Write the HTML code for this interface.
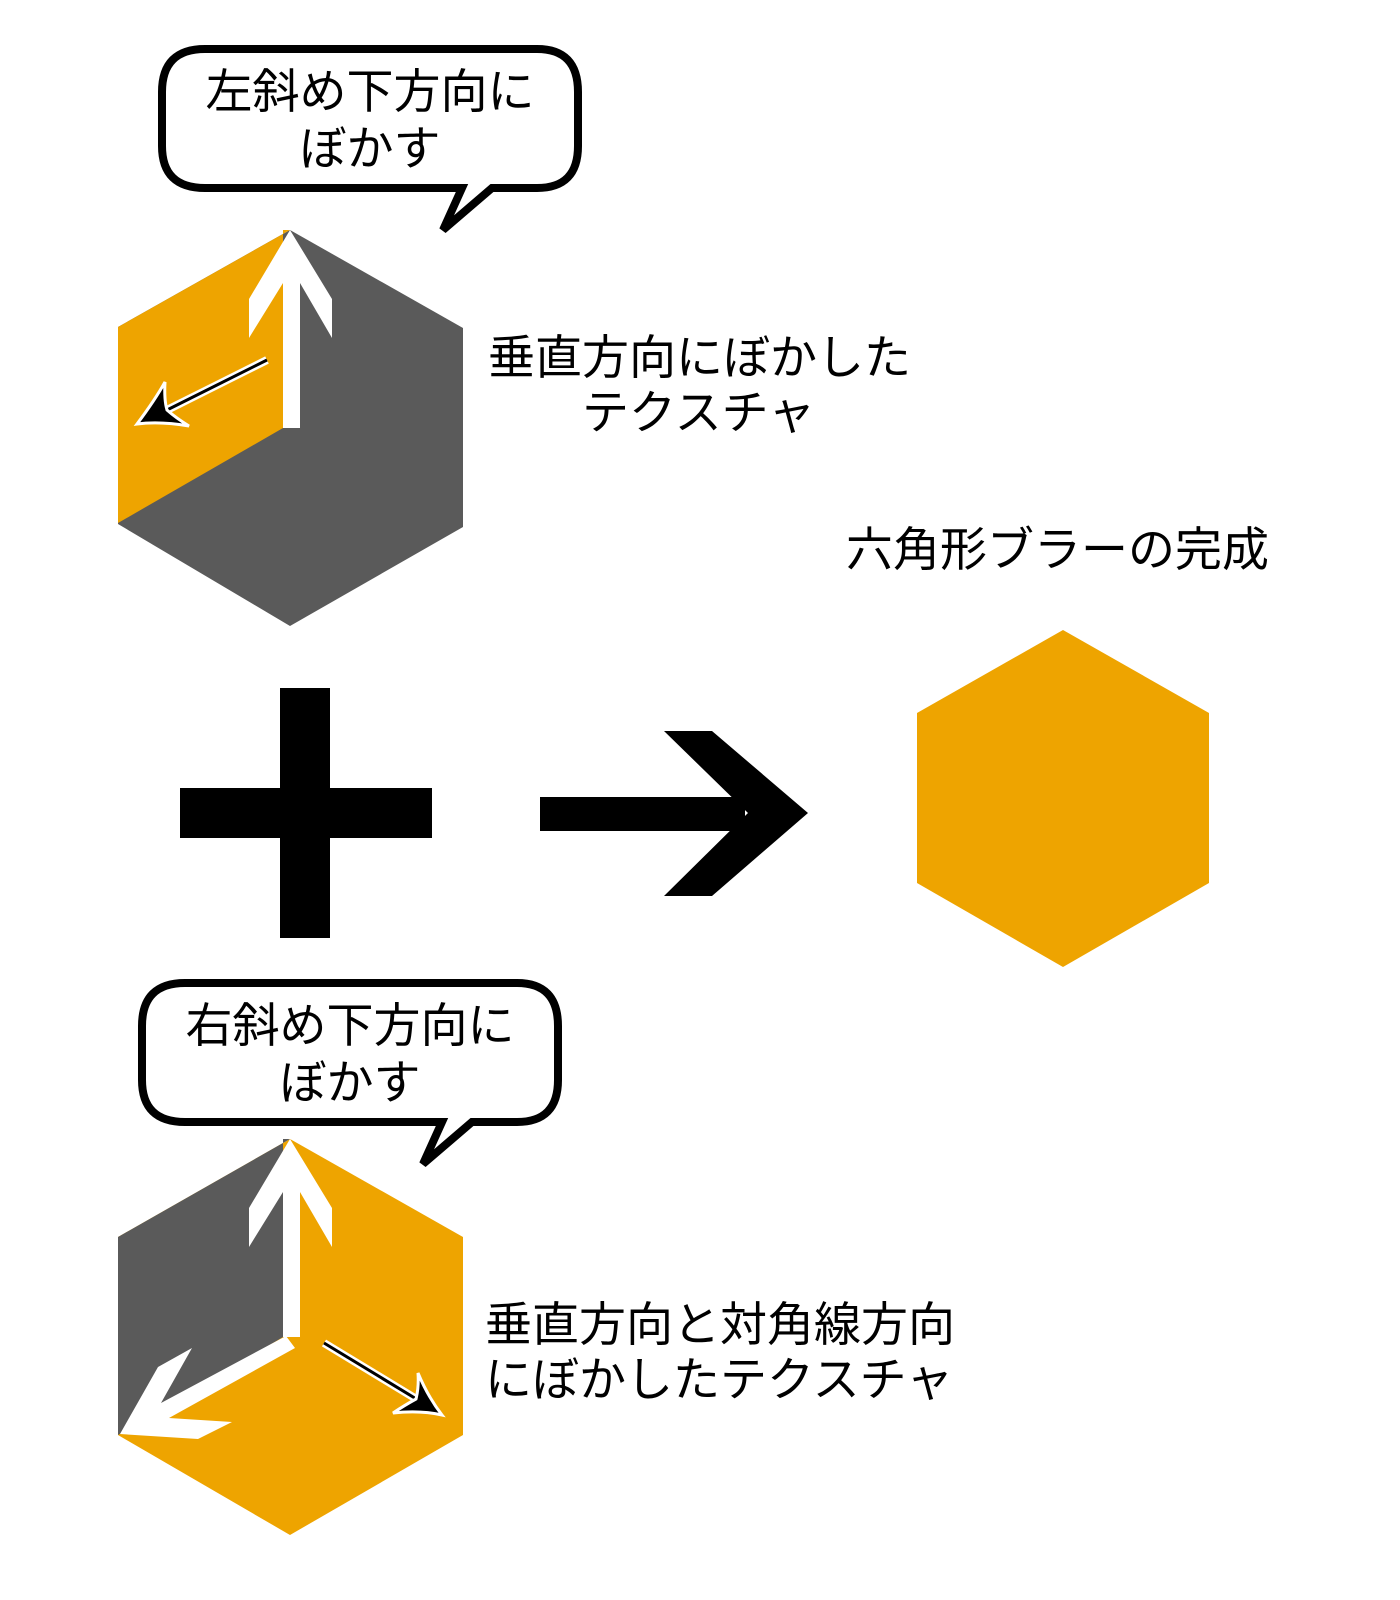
<!DOCTYPE html>
<html><head><meta charset="utf-8"><style>
html,body{margin:0;padding:0;background:#fff;}
svg{display:block}
text{font-family:"Liberation Sans","Noto Sans CJK JP",sans-serif;font-size:47px;fill:#000;font-weight:400}
</style></head><body>
<svg width="1400" height="1600" viewBox="0 0 1400 1600" xmlns="http://www.w3.org/2000/svg">
<!-- bubble 1 -->
<path d="M205,49 H537 Q578,49 578,92 V146 Q578,188 537,188 H492 L443,230 L462,188 H205 Q162,188 162,146 V92 Q162,49 205,49 Z" fill="#fff" stroke="#000" stroke-width="8" stroke-linejoin="miter"/>
<text x="370" y="108" text-anchor="middle">左斜め下方向に</text>
<text x="370" y="165" text-anchor="middle">ぼかす</text>

<!-- top hex -->
<polygon points="290,230 463,328 463,527 290,626 118,524 118,327" fill="#5a5a5a"/>
<polygon points="290,230 118,327 118,523 283,428 283,230" fill="#eea400"/>
<polygon points="290,230 332,299 332,338 300,283 300,428 283,428 283,283 249,338 249,299" fill="#fff"/>
<line x1="267" y1="360" x2="165" y2="411" stroke="#fff" stroke-width="8"/>
<line x1="267" y1="360" x2="165" y2="411" stroke="#000" stroke-width="3"/>
<path d="M137,424 Q155,400 165,382 Q164,400 167,410 Q176,418 189,426 Q160,421 137,424 Z" fill="#000" stroke="#fff" stroke-width="3"/>

<text x="488" y="374">垂直方向にぼかした</text>
<text x="582" y="429">テクスチャ</text>

<!-- plus -->
<rect x="280" y="688" width="50" height="250" fill="#000"/>
<rect x="180" y="788" width="252" height="50" fill="#000"/>
<!-- arrow -->
<rect x="540" y="797" width="205" height="34" fill="#000"/>
<polygon points="664,731 712,731 808,813 712,896 664,896 748,813" fill="#000"/>

<text x="846" y="566">六角形ブラーの完成</text>
<polygon points="1063,630 1209,713 1209,883 1063,967 917,883 917,713" fill="#eea400"/>

<!-- bubble 2 -->
<path d="M185,983 H517 Q558,983 558,1026 V1080 Q558,1122 517,1122 H472 L423,1164 L442,1122 H185 Q142,1122 142,1080 V1026 Q142,983 185,983 Z" fill="#fff" stroke="#000" stroke-width="8"/>
<text x="350" y="1042" text-anchor="middle">右斜め下方向に</text>
<text x="350" y="1099" text-anchor="middle">ぼかす</text>

<!-- bottom hex -->
<polygon points="290,1139 463,1237 463,1435 290,1535 118,1435 118,1237" fill="#eea400"/>
<polygon points="290,1139 118,1237 118,1435 283,1337 283,1139" fill="#5a5a5a"/>
<polygon points="290,1139 332,1208 332,1247 300,1192 300,1337 283,1337 283,1192 249,1247 249,1208" fill="#fff"/>
<polygon points="120,1434 158,1367 192,1348 161,1403 286,1336 295,1348 169,1418 232,1422 198,1439" fill="#fff"/>
<line x1="324" y1="1343" x2="418" y2="1400" stroke="#fff" stroke-width="8"/>
<line x1="324" y1="1343" x2="418" y2="1400" stroke="#000" stroke-width="3"/>
<path d="M442,1415 Q420,1410 393,1413 Q405,1405 416,1399 Q419,1387 418,1373 Q428,1397 442,1415 Z" fill="#000" stroke="#fff" stroke-width="3"/>

<text x="485" y="1341">垂直方向と対角線方向</text>
<text x="485" y="1396">にぼかしたテクスチャ</text>
</svg>
</body></html>
